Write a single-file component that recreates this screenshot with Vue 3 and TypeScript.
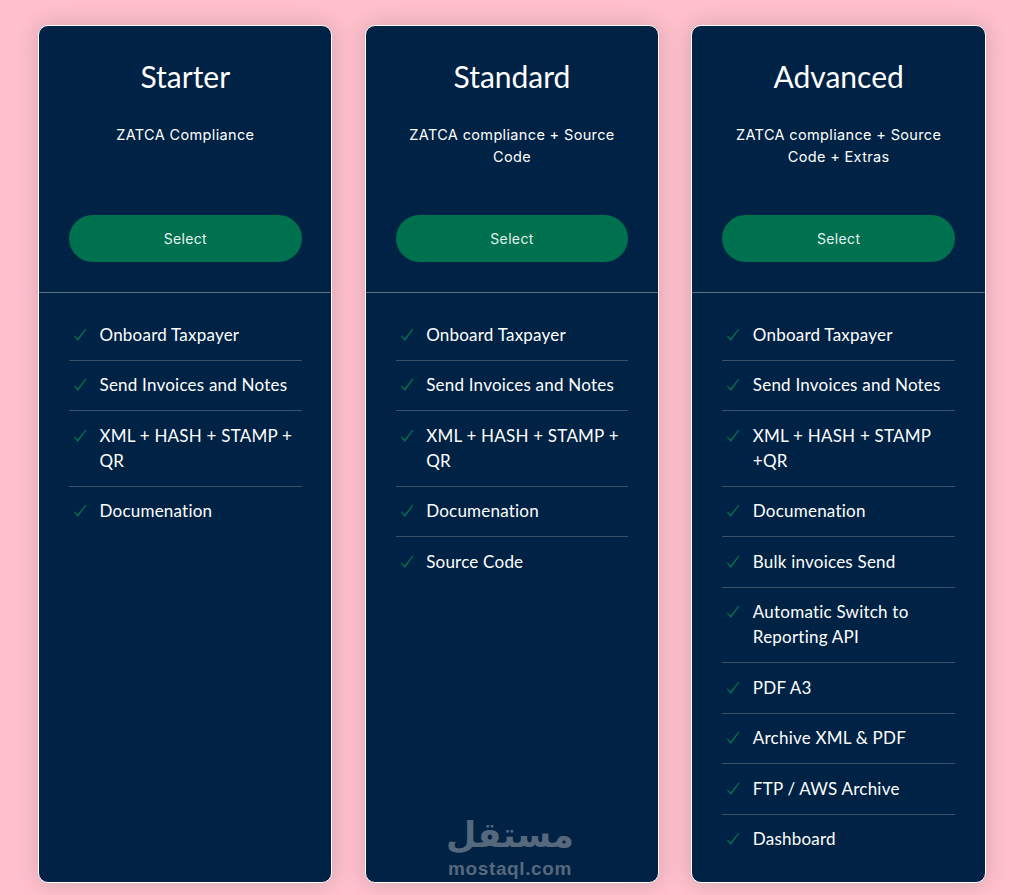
<script setup lang="ts">
interface Plan { name: string; desc: string; features: string[] }
const plans: Plan[] = [
  { name: 'Starter', desc: 'ZATCA Compliance', features: ['Onboard Taxpayer', 'Send Invoices and Notes', 'XML + HASH + STAMP + QR', 'Documenation'] },
  { name: 'Standard', desc: 'ZATCA compliance + Source Code', features: ['Onboard Taxpayer', 'Send Invoices and Notes', 'XML + HASH + STAMP + QR', 'Documenation', 'Source Code'] },
  { name: 'Advanced', desc: 'ZATCA compliance + Source Code + Extras', features: ['Onboard Taxpayer', 'Send Invoices and Notes', 'XML + HASH + STAMP +QR', 'Documenation', 'Bulk invoices Send', 'Automatic Switch to Reporting API', 'PDF A3', 'Archive XML & PDF', 'FTP / AWS Archive', 'Dashboard'] },
]
</script>

<template>
  <main class="page">
    <section v-for="plan in plans" :key="plan.name" class="card">
      <header class="head">
        <h2 class="name">{{ plan.name }}</h2>
        <p class="desc">{{ plan.desc }}</p>
        <button class="select" type="button">Select</button>
      </header>
      <ul class="features">
        <li v-for="f in plan.features" :key="f" class="feature">
          <svg class="check" viewBox="0 0 14 14" width="14" height="14" aria-hidden="true">
            <path d="M0.8 8 L1.6 7.4 L4.6 10.6 L12.6 0.6 L13.4 1.2 L4.8 13 Z" fill="#06704f" />
          </svg>
          <span>{{ f }}</span>
        </li>
      </ul>
    </section>
    <div class="mark">
      <div class="mark-ar" lang="ar" dir="rtl">مستقل</div>
      <div class="mark-en">mostaql.com</div>
    </div>
  </main>
</template>

<style>
html, body { margin: 0; background: #ffc0cb; }
</style>

<style scoped>
.page {
  position: relative;
  box-sizing: border-box;
  height: 895px;
  overflow: hidden;
  padding: 25px 35.33px 12px 38px;
  display: grid;
  grid-template-columns: repeat(3, 1fr);
  column-gap: 32.33px;
  background: #ffc0cb;
  font-family: Lato, "Liberation Sans", sans-serif;
}
.card {
  box-sizing: border-box;
  background: #002244;
  border: 1px solid #fff;
  border-radius: 10px;
  box-shadow: 0 0 22px rgba(0, 35, 66, 0.18);
  color: #fff;
  min-width: 0;
}
.head {
  padding: 29px 29.7px 30px 30px;
  border-bottom: 1px solid #5f7185;
  text-align: center;
}
.name {
  margin: 0;
  font-size: 30px;
  line-height: 42px;
  font-weight: 400;
}
.desc {
  margin: 27px 0 0;
  height: 88px;
  font-family: Inter, sans-serif;
  font-size: 14.5px;
  line-height: 22px;
  letter-spacing: 0.35px;
}
.select {
  display: block;
  width: 100%;
  height: 47px;
  margin-top: 3px;
  border: 0;
  border-radius: 24px;
  background: #00714f;
  color: #e6f2ee;
  font-family: Inter, sans-serif;
  font-size: 14px;
  letter-spacing: 0.35px;
}
.features {
  list-style: none;
  margin: 0;
  padding: 17px 29.7px 0 30px;
}
.feature {
  display: flex;
  gap: 12.5px;
  padding: 11.75px 0 12.75px 4px;
  font-size: 17px;
  line-height: 25px;
  letter-spacing: 0.22px;
  border-bottom: 1px solid #3b5068;
}
.feature:last-child { border-bottom: 0; }
.check { flex: none; margin-top: 6px; }
.mark {
  position: absolute;
  left: 388px;
  width: 244px;
  top: 818px;
  text-align: center;
  color: #56687c;
  pointer-events: none;
}
.mark-ar {
  font-family: "DejaVu Sans", sans-serif;
  font-weight: 700;
  font-size: 35px;
  line-height: 35px;
  margin-bottom: 6px;
}
.mark-en {
  font-family: "Liberation Sans", sans-serif;
  font-weight: 700;
  font-size: 19px;
  line-height: 20px;
  letter-spacing: 0.6px;
}
</style>
